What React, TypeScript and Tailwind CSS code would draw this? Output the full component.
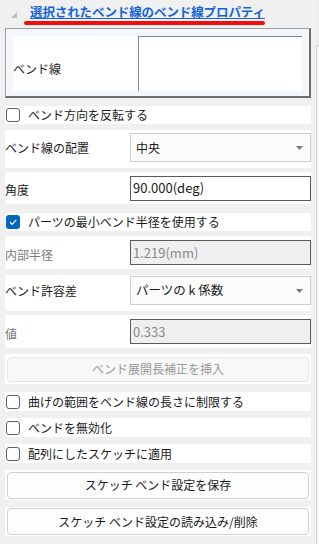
import React from "react";

const font = { fontFamily: '"Noto Sans CJK JP", "Noto Sans", sans-serif' };

function Check({ checked }: { checked?: boolean }) {
  if (checked)
    return (
      <div className="w-[14px] h-[14px] rounded-[3px] bg-[#0067c0] flex items-center justify-center shrink-0">
        <svg width="10" height="10" viewBox="0 0 10 10">
          <path d="M2 5.2 L4.2 7.3 L8.2 2.8" stroke="white" strokeWidth="1.2" fill="none" />
        </svg>
      </div>
    );
  return <div className="w-[14px] h-[14px] rounded-[3px] border border-[#5f5f5f] bg-white shrink-0" />;
}

function CheckRow({ label, checked, mt, h = 18 }: { label: string; checked?: boolean; mt: string; h?: number }) {
  return (
    <div className={`${mt} bg-white flex items-center pl-[1px] gap-[8px]`} style={{ height: h }}>
      <Check checked={checked} />
      <span className="text-[12px] text-[#1b1b1b] leading-none">{label}</span>
    </div>
  );
}

function Arrow() {
  return (
    <svg width="7" height="4" viewBox="0 0 7 4" className="mr-[7px]">
      <path d="M0 0 L7 0 L3.5 4 Z" fill="#7a7a7a" />
    </svg>
  );
}

export default function App() {
  return (
    <div className="w-[319px] h-[544px] bg-[#f0f0f0] flex overflow-hidden" style={font}>
      <div className="w-[311px] pl-[5px] flex flex-col">
        {/* header */}
        <div className="h-[28px] relative flex items-center">
          <svg width="6" height="6" viewBox="0 0 6 6" className="absolute left-[6px] top-[12px]">
            <path d="M6 0 L6 6 L0 6 Z" fill="#bcbcbc" />
          </svg>
          <span className="absolute left-[25px] top-[3px] text-[12.5px] font-bold text-[#1565d8] underline leading-[18px] tracking-[-0.1px]">
            選択されたベンド線のベンド線プロパティ
          </span>
          <div className="absolute left-[19px] top-[21px] w-[241px] h-[4px] rounded-full bg-[#f20d0d]" />
        </div>
        {/* bend line group */}
        <div className="h-[70px] border border-[#a0a0a0] border-r-[2px] border-b-[2px] border-r-[#6e6e6e] border-b-[#6e6e6e] bg-[#f3f6fb] p-[7px] pb-[5px] flex">
          <div className="flex-1 bg-white flex">
            <div className="w-[125px] flex items-center pt-[10px]">
              <span className="text-[12px] text-[#1b1b1b]">ベンド線</span>
            </div>
            <div className="flex-1 border-l border-t border-[#8a8a8a] bg-white" />
          </div>
        </div>
        <CheckRow mt="mt-[8px]" label="ベンド方向を反転する" />
        {/* 配置 */}
        <div className="mt-[6px] h-[38px] bg-white flex items-start pt-[3px]">
          <div className="w-[125px] h-[29px] flex items-center">
            <span className="text-[12px] text-[#1b1b1b]">ベンド線の配置</span>
          </div>
          <div className="flex-1 h-[29px] border border-[#cfcfcf] bg-[#fbfbfb] flex items-center justify-between pl-[5px]">
            <span className="text-[12px] text-[#1b1b1b]">中央</span>
            <Arrow />
          </div>
        </div>
        {/* 角度 */}
        <div className="mt-[4px] h-[32px] bg-white flex items-center">
          <div className="w-[125px]">
            <span className="text-[12px] text-[#1b1b1b]">角度</span>
          </div>
          <div className="flex-1 h-[25px] border border-[#5a5a5a] bg-white flex items-center pl-[2px]">
            <span className="text-[13px] text-[#1b1b1b]">90.000(deg)</span>
          </div>
        </div>
        <CheckRow mt="mt-[9px]" label="パーツの最小ベンド半径を使用する" checked />
        {/* 内部半径 */}
        <div className="mt-[5px] h-[33px] bg-white flex items-center">
          <div className="w-[125px]">
            <span className="text-[12px] text-[#7a7a7a]">内部半径</span>
          </div>
          <div className="flex-1 h-[25px] border border-[#5a5a5a] bg-[#efefef] flex items-center pl-[2px]">
            <span className="text-[13px] text-[#8a8a8a]">1.219(mm)</span>
          </div>
        </div>
        {/* 許容差 */}
        <div className="mt-[6px] h-[36px] bg-white flex items-start pt-[1px]">
          <div className="w-[125px] h-[29px] flex items-center">
            <span className="text-[12px] text-[#1b1b1b]">ベンド許容差</span>
          </div>
          <div className="flex-1 h-[29px] border border-[#cfcfcf] bg-[#fbfbfb] flex items-center justify-between pl-[5px]">
            <span className="text-[12.5px] text-[#1b1b1b]">パーツの k 係数</span>
            <Arrow />
          </div>
        </div>
        {/* 値 */}
        <div className="mt-[4px] h-[33px] bg-white flex items-center">
          <div className="w-[125px]">
            <span className="text-[12px] text-[#7a7a7a]">値</span>
          </div>
          <div className="flex-1 h-[25px] border border-[#5a5a5a] bg-[#efefef] flex items-center pl-[2px]">
            <span className="text-[13px] text-[#8a8a8a]">0.333</span>
          </div>
        </div>
        {/* insert button */}
        <div className="mt-[6px] h-[30px] bg-white flex items-center px-[2px]">
          <div className="flex-1 h-[25px] rounded-[4px] border border-[#e6e6e6] bg-[#f8f8f8] flex items-center justify-center">
            <span className="text-[12px] text-[#9a9a9a]">ベンド展開長補正を挿入</span>
          </div>
        </div>
        <CheckRow mt="mt-[8px]" label="曲げの範囲をベンド線の長さに制限する" h={19} />
        <CheckRow mt="mt-[7px]" label="ベンドを無効化" h={19} />
        <CheckRow mt="mt-[7px]" label="配列にしたスケッチに適用" h={19} />
        <div className="mt-[7px] h-[30px] bg-white flex items-center px-[2px]">
          <div className="flex-1 h-[27px] rounded-[4px] border border-[#d0d0d0] bg-[#fdfdfd] flex items-center justify-center">
            <span className="text-[12px] text-[#1b1b1b]">スケッチ ベンド設定を保存</span>
          </div>
        </div>
        <div className="mt-[7px] h-[29px] bg-white flex items-center px-[2px]">
          <div className="flex-1 h-[27px] rounded-[4px] border border-[#d0d0d0] bg-[#fdfdfd] flex items-center justify-center">
            <span className="text-[12px] text-[#1b1b1b]">スケッチ ベンド設定の読み込み/削除</span>
          </div>
        </div>
      </div>
      <div className="flex-1 flex flex-col pl-[5px]">
        <div className="h-[45px] bg-[#ececec]" />
        <div className="flex-1 border-l border-t border-[#d0d0d0] bg-[#f5f5f5]" />
      </div>
    </div>
  );
}
